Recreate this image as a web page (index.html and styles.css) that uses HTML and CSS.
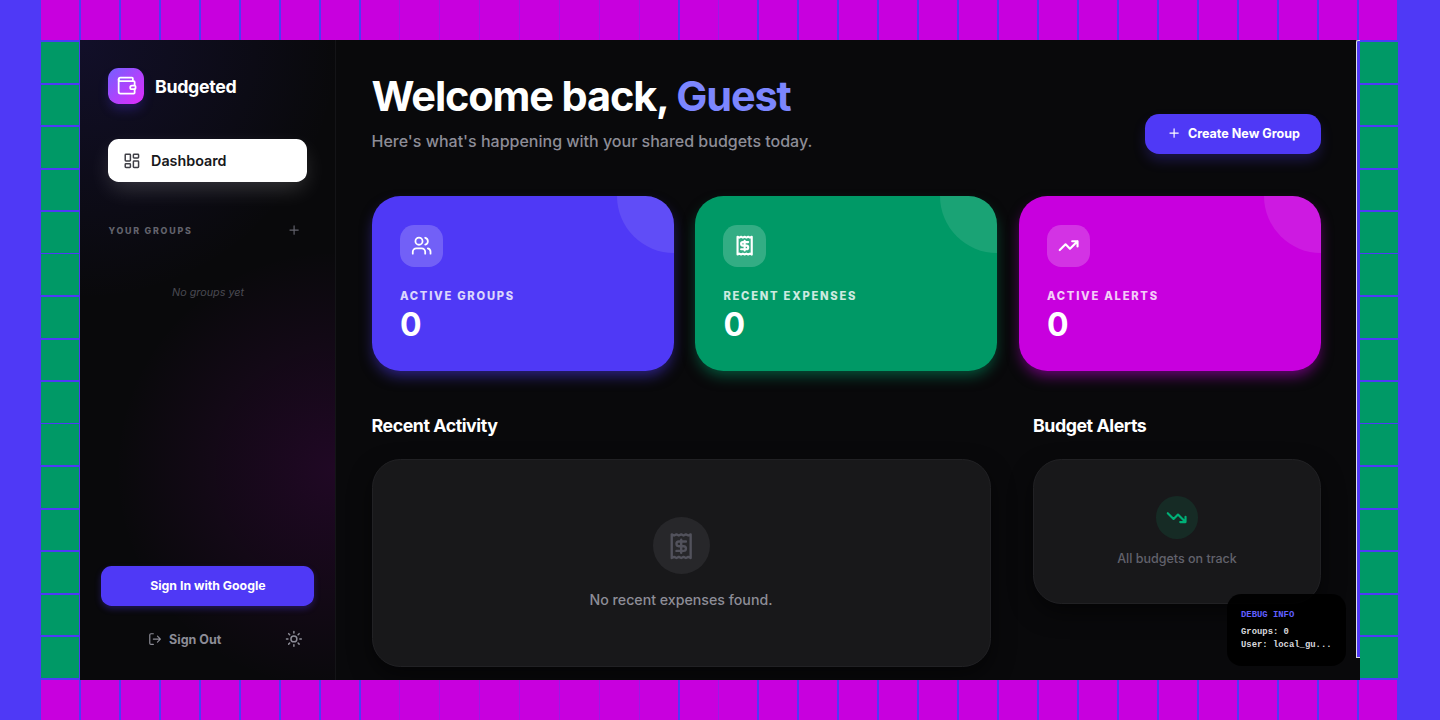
FILE: index.html
```html
<!DOCTYPE html>
<html lang="en">
<head>
<meta charset="utf-8">
<title>Budgeted</title>
<link rel="stylesheet" href="styles.css">
</head>
<body>
<svg width="0" height="0" class="defs">
	<symbol id="plus" viewBox="0 0 24 24"><path d="M5 12h14M12 5v14"/></symbol>
	<symbol id="receipt" viewBox="0 0 24 24"><path d="M4 2v20l2-1 2 1 2-1 2 1 2-1 2 1 2-1 2 1V2l-2 1-2-1-2 1-2-1-2 1-2-1-2 1Z"/><path d="M16 8h-6a2 2 0 1 0 0 4h4a2 2 0 1 1 0 4H8M12 17.5v-11"/></symbol>
</svg>
<div class="strip"><i class="wide"></i><i class="thin"></i><i class="mix"></i><i class="wide end"></i></div>
<div class="middle">
	<div class="side left"></div>
	<div class="app">
		<aside class="sidebar">
			<div class="brand">
				<span class="logo"><svg viewBox="0 0 24 24"><path d="M19 7V4a1 1 0 0 0-1-1H5a2 2 0 0 0 0 4h15a1 1 0 0 1 1 1v4h-3a2 2 0 0 0 0 4h3a1 1 0 0 0 1-1v-2a1 1 0 0 0-1-1"/><path d="M3 5v14a2 2 0 0 0 2 2h15a1 1 0 0 0 1-1v-4"/></svg></span>
				<b>Budgeted</b>
			</div>
			<a class="nav"><svg viewBox="0 0 24 24"><rect width="7" height="9" x="3" y="3" rx="1"/><rect width="7" height="5" x="14" y="3" rx="1"/><rect width="7" height="9" x="14" y="12" rx="1"/><rect width="7" height="5" x="3" y="16" rx="1"/></svg><span>Dashboard</span></a>
			<div class="groups"><span>YOUR GROUPS</span><svg><use href="#plus"/></svg></div>
			<p class="none">No groups yet</p>
			<div class="foot">
				<button class="signin"><span>Sign In with Google</span></button>
				<div class="row">
					<a class="signout"><svg viewBox="0 0 24 24"><path d="m16 17 5-5-5-5M21 12H9M9 21H5a2 2 0 0 1-2-2V5a2 2 0 0 1 2-2h4"/></svg><span>Sign Out</span></a>
					<svg class="sun" viewBox="0 0 24 24"><circle cx="12" cy="12" r="4"/><path d="M12 2v2M12 20v2M4.93 4.93l1.41 1.41M17.66 17.66l1.41 1.41M2 12h2M20 12h2M6.34 17.66l-1.41 1.41M19.07 4.93l-1.41 1.41"/></svg>
				</div>
			</div>
		</aside>
		<main>
			<header>
				<div>
					<h1><span>Welcome back,</span> <em>Guest</em></h1>
					<p>Here's what's happening with your shared budgets today.</p>
				</div>
				<button class="create"><svg><use href="#plus"/></svg><span>Create New Group</span></button>
			</header>
			<div class="stats">
				<div class="stat indigo">
					<span class="ico"><svg viewBox="0 0 24 24"><path d="M16 21v-2a4 4 0 0 0-4-4H6a4 4 0 0 0-4 4v2"/><circle cx="9" cy="7" r="4"/><path d="M22 21v-2a4 4 0 0 0-3-3.87M16 3.13a4 4 0 0 1 0 7.75"/></svg></span>
					<h3>ACTIVE GROUPS</h3>
					<strong>0</strong>
				</div>
				<div class="stat green">
					<span class="ico"><svg class="bold"><use href="#receipt"/></svg></span>
					<h3>RECENT EXPENSES</h3>
					<strong>0</strong>
				</div>
				<div class="stat pink">
					<span class="ico"><svg class="bold" viewBox="0 0 24 24"><path d="M22 7l-8.5 8.5-5-5L2 17M16 7h6v6"/></svg></span>
					<h3>ACTIVE ALERTS</h3>
					<strong>0</strong>
				</div>
			</div>
			<div class="panels">
				<section class="activity">
					<h2>Recent Activity</h2>
					<div class="panel">
						<span class="round"><svg><use href="#receipt"/></svg></span>
						<p>No recent expenses found.</p>
					</div>
				</section>
				<section class="alerts">
					<h2>Budget Alerts</h2>
					<div class="panel">
						<span class="round"><svg class="bold" viewBox="0 0 24 24"><path d="M22 17l-8.5-8.5-5 5L2 7M16 17h6v-6"/></svg></span>
						<p>All budgets on track</p>
					</div>
				</section>
			</div>
		</main>
		<div class="scroll"></div>
		<div class="debug">
			<b>DEBUG INFO</b>
			<p>Groups: 0</p>
			<p>User: local_gu...</p>
		</div>
	</div>
	<div class="side right"></div>
</div>
<div class="strip"><i class="wide"></i><i class="thin"></i><i class="mix"></i><i class="wide end"></i></div>
</body>
</html>
```
FILE: styles.css
```css
*{box-sizing:border-box;margin:0;padding:0;}
body{width:1440px;height:720px;overflow:hidden;background:#4f39f6;font-family:Inter,sans-serif;color:#fff;}
svg{fill:none;stroke:currentColor;stroke-width:2;stroke-linecap:round;stroke-linejoin:round;flex:none;display:block;}
.bold{stroke-width:2.4;}
button{border:0;font:inherit;color:#fff;}
span{white-space:nowrap;}
.defs{position:absolute;}

/* tiled frame */
.strip{display:flex;width:1357px;height:40px;margin-left:41px;background:#c800de;}
.strip i{height:40px;background:repeating-linear-gradient(90deg,transparent 0 38px,#4f39f6 38px 40px);}
.strip .wide{width:320px;}
.strip .thin{width:279px;background:linear-gradient(90deg,transparent 38px,#9a1ae6 38px 39px,transparent 39px) 0 0/40px 40px;}
.strip .mix{width:79px;background:linear-gradient(90deg,#4f39f6,#4f39f6) 38px 0/2px 40px no-repeat,linear-gradient(#9a1ae6,#9a1ae6) 78px 0/1px 40px no-repeat;}
.strip .end{flex:1;}
.middle{display:flex;height:640px;padding-left:41px;}
.side{width:38px;background:linear-gradient(#009966,#009966) 0 214px/100% 1px no-repeat,linear-gradient(#009966,#009966) 0 384px/100% 1px no-repeat,repeating-linear-gradient(#4f39f6 0 2px,#009966 2px 43px,#4f39f6 43px 45px,#009966 45px 85px);}
.left{width:39px;border-right:1px solid #4f39f6;}

.app{position:relative;display:flex;width:1280px;height:640px;background:#09090b;overflow:hidden;}
.sidebar{display:flex;flex-direction:column;width:256px;padding:28px 28.4px 0;border-right:1px solid #141417;
	background:radial-gradient(circle 260px at 0 0,rgba(79,57,246,.13),transparent),radial-gradient(circle 220px at 100% 430px,rgba(200,0,222,.12),transparent),#09090b;}
.brand{display:flex;align-items:center;gap:10.7px;height:36px;font-size:17.8px;}
.brand b{letter-spacing:-.35px;}
.logo{display:flex;align-items:center;justify-content:center;width:36px;height:36px;border-radius:10.7px;background:linear-gradient(135deg,#7460ff,#e12afb);box-shadow:0 7px 12px -2px rgba(79,57,246,.3);}
.logo svg{width:21.3px;height:21.3px;}
.nav{display:flex;align-items:center;gap:10.7px;width:199px;height:43px;margin-top:35.4px;padding-left:14.2px;border-radius:10.7px;background:#fff;color:#18181b;font-size:14.3px;font-weight:600;box-shadow:0 9px 22px -3px rgba(255,255,255,.18);}
.nav svg{width:17.8px;height:17.8px;color:#3f3f46;}
.groups{display:flex;justify-content:space-between;align-items:center;height:16px;margin-top:40.1px;padding-right:5px;color:#62626c;font-size:8.9px;font-weight:800;letter-spacing:1.75px;}
.groups svg{width:14.2px;height:14.2px;}
.none{margin-top:47.3px;padding-left:1px;text-align:center;color:#4a4a52;font-size:10.8px;font-style:italic;line-height:14px;}
.foot{margin:auto -7px 28px;}
.signin{display:block;width:213px;height:39.5px;border-radius:10.7px;background:#4f39f6;font-size:12.3px;font-weight:700;box-shadow:0 3px 6px rgba(79,57,246,.3);}
.row{display:flex;align-items:center;height:26px;margin-top:20.5px;padding-left:46.5px;color:#8d8d97;}
.signout{display:flex;align-items:center;gap:7px;width:137.5px;font-size:12.5px;font-weight:700;}
.signout svg{width:14.2px;height:14.2px;}
.sun{width:17.8px;height:17.8px;}

main{width:1020px;padding:35.5px 35.3px 0 35.5px;}
header{display:flex;justify-content:space-between;align-items:flex-end;height:78px;}
h1{font-size:41.5px;line-height:42.7px;letter-spacing:-1.15px;white-space:nowrap;}
h1 em{font-style:normal;color:#7c86ff;}
header p{margin-top:11px;padding-bottom:1px;color:#8d8d97;font-size:16px;font-weight:500;line-height:24px;}
.create{display:flex;align-items:center;gap:7px;width:175.5px;height:40px;padding-left:21.5px;border-radius:14.2px;background:#4f39f6;font-size:12.55px;font-weight:700;box-shadow:0 7px 14px -2px rgba(79,57,246,.3);}
.create svg{width:14.2px;height:14.2px;}
.stats{display:grid;grid-template-columns:repeat(3,1fr);gap:21.3px;margin-top:42.7px;}
.stat{position:relative;height:175px;padding:28.4px;border-radius:28.4px;overflow:hidden;}
.stat:before{content:"";position:absolute;top:-57px;right:-57px;width:114px;height:114px;border-radius:50%;background:rgba(255,255,255,.1);}
.indigo{background:#4f39f6;box-shadow:0 7px 14px -2px rgba(79,57,246,.5);}
.green{background:#009966;box-shadow:0 7px 14px -2px rgba(0,153,102,.5);}
.pink{background:#c800de;box-shadow:0 7px 14px -2px rgba(200,0,222,.5);}
.ico{display:flex;align-items:center;justify-content:center;width:42.7px;height:42.7px;border-radius:14.2px;background:rgba(255,255,255,.2);}
.ico svg{width:21.3px;height:21.3px;}
.stat h3{margin-top:22px;font-size:11.2px;font-weight:800;line-height:14.2px;letter-spacing:1.75px;opacity:.8;white-space:nowrap;}
.stat strong{display:block;margin-top:4px;font-size:32px;line-height:35.5px;}
.panels{display:grid;grid-template-columns:619px 288px;gap:42.5px;align-items:start;margin-top:42px;}
h2{font-size:17.8px;line-height:25px;letter-spacing:-.45px;}
.panel{display:flex;flex-direction:column;align-items:center;margin-top:21.2px;border:1px solid #212124;border-radius:28.4px;background:#18181a;box-shadow:0 9px 22px rgba(0,0,0,.5);}
.round{display:flex;align-items:center;justify-content:center;border-radius:50%;}
.activity .panel{height:208px;padding-top:57px;color:#8d8d97;font-size:14.2px;font-weight:500;}
.activity .round{width:57px;height:57px;margin-bottom:16.5px;background:#27272a;color:#52525c;}
.activity svg{width:28.4px;height:28.4px;}
.alerts .panel{height:144.5px;padding-top:35.5px;color:#62626c;font-size:12.5px;font-weight:500;}
.alerts .round{width:42.7px;height:42.7px;margin-bottom:12px;background:#162b25;color:#00b077;}
.alerts svg{width:21.3px;height:21.3px;}

.scroll{width:4px;height:617.5px;border:1px solid #dedee4;border-right:0;background:#4f39f6;border-radius:2px 0 0 0;}
.debug{position:absolute;right:14.5px;bottom:14.5px;width:118.5px;height:71.5px;padding:15.4px 0 0 14px;border-radius:14.2px;background:rgba(0,0,0,.93);color:#d8d8dc;font:bold 8.89px/13.3px "Liberation Mono",monospace;white-space:nowrap;}
.debug b{display:block;margin-bottom:3.5px;color:#615fff;}
```
